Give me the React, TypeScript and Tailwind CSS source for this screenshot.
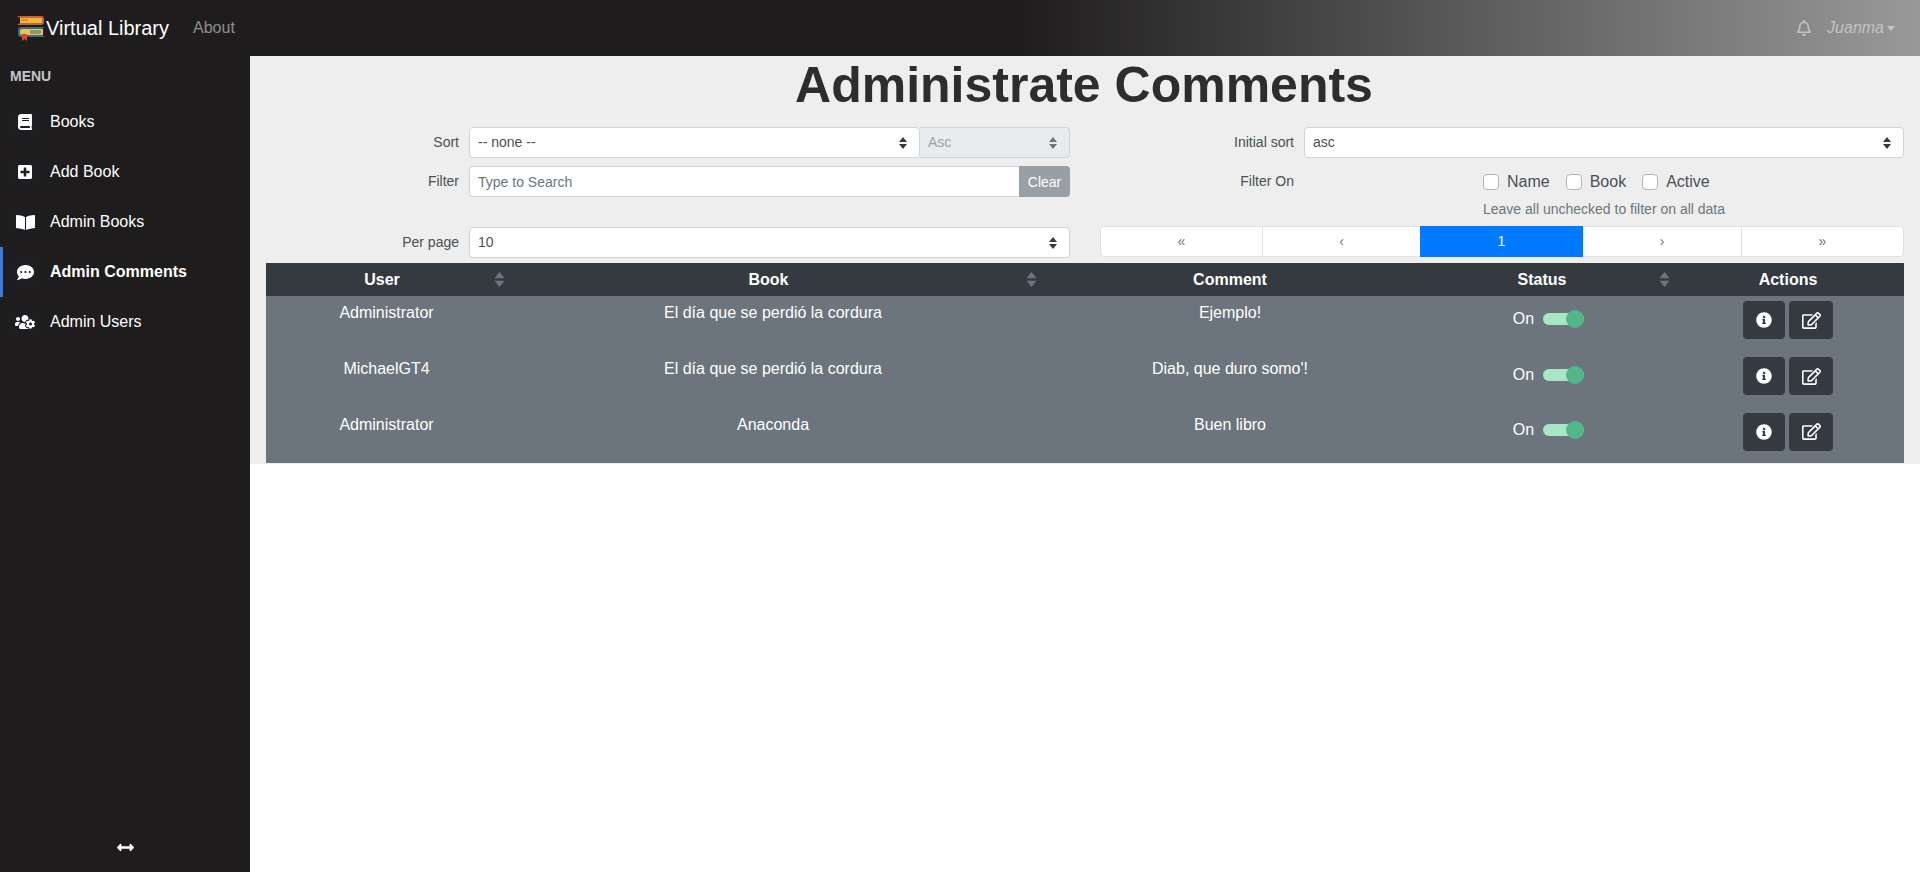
import type { ReactNode } from "react";
import {
  FaArrowsAltH,
  FaBook,
  FaBookOpen,
  FaCommentDots,
  FaInfoCircle,
  FaPlusSquare,
  FaRegBell,
  FaRegEdit,
  FaUsersCog,
} from "react-icons/fa";

const labelClasses = "shrink-0 text-right text-sm text-[#495057]";
const controlClasses =
  "h-[31px] w-full appearance-none rounded border border-[#ced4da] px-2 text-sm outline-none";

const menuItems = [
  { label: "Books", icon: <FaBook size={16} /> },
  { label: "Add Book", icon: <FaPlusSquare size={16} /> },
  { label: "Admin Books", icon: <FaBookOpen size={19} /> },
  { label: "Admin Comments", icon: <FaCommentDots size={17} />, active: true },
  { label: "Admin Users", icon: <FaUsersCog size={20} /> },
];

const comments = [
  { user: "Administrator", book: "El día que se perdió la cordura", comment: "Ejemplo!" },
  { user: "MichaelGT4", book: "El día que se perdió la cordura", comment: "Diab, que duro somo'!" },
  { user: "Administrator", book: "Anaconda", comment: "Buen libro" },
];

function Logo() {
  return (
    <svg width="30" height="26" viewBox="0 0 30 26" className="shrink-0">
      <path d="M1 1h24q3 0 3 3v3q0 3-3 3H1l3-2V3z" fill="#c9622f" />
      <path d="M4 3h21q1 0 1 1v3q0 1-1 1H4z" fill="#f2b63c" />
      <path d="M5 5h7" stroke="#a8752a" strokeWidth="1" />
      <path d="M29 12H5q-3 0-3 3v4q0 3 3 3h24l-3-2v-6z" fill="#2f6f8f" />
      <path d="M27 14H6q-2 0-2 2v2q0 2 2 2h21z" fill="#f2c14e" />
      <path d="M14 16h11M14 18h11" stroke="#2f6f8f" strokeWidth="1" />
      <path d="M6 19h5v7l-2.5-2L6 26z" fill="#d9463a" />
    </svg>
  );
}

function Carets({ className }: { className: string }) {
  return (
    <svg width="8" height="12" viewBox="0 0 8 12" className={className}>
      <path d="M4 0l4 5H0zM4 12L0 7h8z" fill="currentColor" />
    </svg>
  );
}

function SelectBox({
  value,
  disabled,
  className,
}: {
  value: string;
  disabled?: boolean;
  className?: string;
}) {
  return (
    <div className={`relative ${className ?? "w-full"}`}>
      <select
        disabled={disabled}
        defaultValue={value}
        className={`${controlClasses} pb-[2px] ${
          disabled ? "rounded-l-none border-l-0 bg-[#e9ecef] text-[#9aa0a6]" : "bg-white text-[#495057]"
        }`}
      >
        <option>{value}</option>
      </select>
      <Carets
        className={`absolute right-[13px] top-[10px] ${disabled ? "text-[#6c757d]" : "text-[#343a40]"}`}
      />
    </div>
  );
}

function FormRow({
  label,
  children,
  className,
  labelClass,
}: {
  label: string;
  children: ReactNode;
  className?: string;
  labelClass: string;
}) {
  return (
    <div className={`flex gap-[10px] ${className ?? ""}`}>
      <label className={`${labelClasses} ${labelClass} leading-[31px]`}>{label}</label>
      <div className="min-w-0 flex-1">{children}</div>
    </div>
  );
}

function SortHeader({ label, width }: { label: string; width: string }) {
  return (
    <th className={`relative h-[33px] p-0 text-center font-bold ${width}`}>
      <span className="pr-[9px]">{label}</span>
      <Carets className="absolute right-[2px] top-[9px] h-[15px] w-[11px] text-[#6c757d]" />
    </th>
  );
}

export default function App() {
  return (
    <div className="flex h-screen flex-col overflow-hidden bg-white font-['Liberation_Sans',Arial,sans-serif]">
      <nav className="flex h-14 shrink-0 items-center bg-[linear-gradient(90deg,#1e1c1d_53%,#999999_100%)] pl-4 pr-[25px]">
        <a className="flex items-center text-xl text-white" href="#">
          <Logo />
          <span>Virtual Library</span>
        </a>
        <a className="ml-6 text-base text-white/50" href="#">
          About
        </a>
        <div className="ml-auto flex items-center text-[#c4c4c4]">
          <FaRegBell size={16} />
          <span className="ml-[15px] text-base italic">Juanma</span>
          <span className="ml-[3px] mt-[1px] h-0 w-0 border-x-[4px] border-t-[5px] border-x-transparent border-t-[#c4c4c4]" />
        </div>
      </nav>

      <div className="flex min-h-0 flex-1">
        <aside className="flex w-[250px] shrink-0 flex-col bg-[#1e1c1d]">
          <div className="pl-[10px] pt-[12px] text-sm font-bold leading-4 text-[#c3c5c9]">MENU</div>
          <ul className="mt-[13px]">
            {menuItems.map((item) => (
              <li
                key={item.label}
                className={`flex h-[50px] items-center text-base text-white ${
                  item.active ? "border-l-[3px] border-[#3b7ddd] pl-[7px] font-bold" : "pl-[10px]"
                }`}
              >
                <span className="flex h-[30px] w-[30px] items-center justify-center rounded bg-[#1d1e21]">
                  {item.icon}
                </span>
                <span className="ml-[10px]">{item.label}</span>
              </li>
            ))}
          </ul>
          <div className="mt-auto flex justify-center pb-[16px] text-white">
            <FaArrowsAltH size={17} />
          </div>
        </aside>

        <main className="min-w-0 flex-1">
          <div className="bg-[#eeeeee] px-4 pb-px">
            <h1 className="pr-[2px] text-center text-[50px] leading-[58px] font-bold text-[#2d2d2d]">
              Administrate Comments
            </h1>
            <div className="mt-[13px] grid grid-cols-2 gap-x-[30px]">
              <div>
                <FormRow label="Sort" labelClass="w-[193px]" className="mb-[8px]">
                  <div className="flex">
                    <div className="flex-1">
                      <SelectBox value="-- none --" />
                    </div>
                    <SelectBox value="Asc" disabled className="w-[150px]" />
                  </div>
                </FormRow>
                <FormRow label="Filter" labelClass="w-[193px]" className="mb-[30px]">
                  <div className="flex">
                    <input
                      className={`${controlClasses} rounded-r-none border-r-0 bg-white text-[#495057] placeholder:text-[#6c757d]`}
                      placeholder="Type to Search"
                    />
                    <button className="h-[31px] w-[51px] shrink-0 rounded-r bg-[#9a9ea5] text-sm text-white">
                      Clear
                    </button>
                  </div>
                </FormRow>
                <FormRow label="Per page" labelClass="w-[193px]">
                  <SelectBox value="10" />
                </FormRow>
              </div>
              <div>
                <FormRow label="Initial sort" labelClass="w-[194px]" className="mb-[8px]">
                  <SelectBox value="asc" />
                </FormRow>
                <FormRow label="Filter On" labelClass="w-[194px]" className="mb-[7px]">
                  <div className="pl-[179px] pt-[4px]">
                    <div className="flex gap-[16px]">
                      {["Name", "Book", "Active"].map((name) => (
                        <label key={name} className="flex items-center gap-2 text-base text-[#495057]">
                          <input
                            type="checkbox"
                            className="h-4 w-4 appearance-none rounded border border-[#adb5bd] bg-white"
                          />
                          {name}
                        </label>
                      ))}
                    </div>
                    <p className="mt-[5px] text-sm leading-5 text-[#6c757d]">
                      Leave all unchecked to filter on all data
                    </p>
                  </div>
                </FormRow>
                <ul className="grid h-[31px] grid-cols-[161px_158px_163px_158px_1fr] rounded border border-[#dee2e6] bg-white text-center text-sm leading-[29px] text-[#6c757d]">
                  <li>«</li>
                  <li className="border-l border-[#dee2e6]">‹</li>
                  <li className="-my-px bg-[#007bff] leading-[31px] text-white">1</li>
                  <li>›</li>
                  <li className="border-l border-[#dee2e6]">»</li>
                </ul>
              </div>
            </div>

            <table className="mt-[5px] w-full table-fixed text-base text-white">
              <thead className="bg-[#343a40]">
                <tr>
                  <SortHeader label="User" width="w-[241px]" />
                  <SortHeader label="Book" width="w-[532px]" />
                  <th className="h-[33px] w-[382px] p-0 text-center font-bold">Comment</th>
                  <SortHeader label="Status" width="w-[251px]" />
                  <th className="p-0 text-center font-bold">Actions</th>
                </tr>
              </thead>
              <tbody className="bg-[#6c757d]">
                {comments.map((row, i) => (
                  <tr key={i} className="h-[56px] last:h-[55px]">
                    <td className="pb-[22px] text-center align-middle">{row.user}</td>
                    <td className="pb-[22px] text-center align-middle">{row.book}</td>
                    <td className="pb-[22px] text-center align-middle">{row.comment}</td>
                    <td className="p-0 align-middle">
                      <div className="flex items-center justify-center pb-[11px] pl-[4px]">
                        <span>On</span>
                        <span className="relative ml-[9px] h-3 w-[41px] rounded-full bg-[#a8e6c5]">
                          <span className="absolute -top-[3px] right-0 h-[18px] w-[18px] rounded-full bg-[#52b788]" />
                        </span>
                      </div>
                    </td>
                    <td className="p-0 align-middle">
                      <div className="flex justify-center gap-1 pb-[8px]">
                        <button className="flex h-[38px] w-[42px] items-center justify-center rounded bg-[#343a40]">
                          <FaInfoCircle size={16} />
                        </button>
                        <button className="flex h-[38px] w-[44px] items-center justify-center rounded bg-[#343a40]">
                          <FaRegEdit size={19} />
                        </button>
                      </div>
                    </td>
                  </tr>
                ))}
              </tbody>
            </table>
          </div>
        </main>
      </div>
    </div>
  );
}
